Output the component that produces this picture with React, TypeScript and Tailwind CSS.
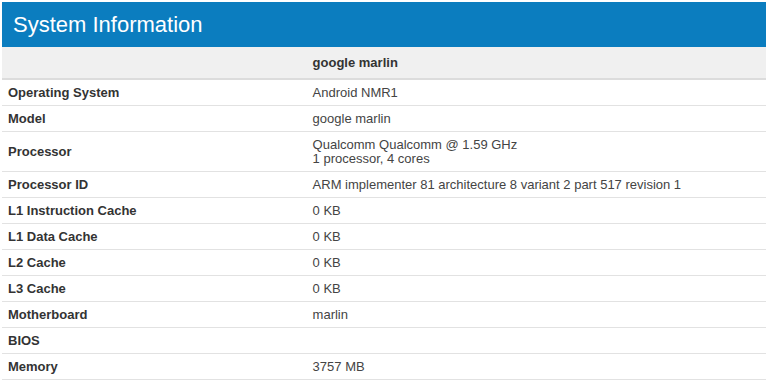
const rows: [string, string[]][] = [
  ['Operating System', ['Android NMR1']],
  ['Model', ['google marlin']],
  ['Processor', ['Qualcomm Qualcomm @ 1.59 GHz', '1 processor, 4 cores']],
  ['Processor ID', ['ARM implementer 81 architecture 8 variant 2 part 517 revision 1']],
  ['L1 Instruction Cache', ['0 KB']],
  ['L1 Data Cache', ['0 KB']],
  ['L2 Cache', ['0 KB']],
  ['L3 Cache', ['0 KB']],
  ['Motherboard', ['marlin']],
  ['BIOS', []],
  ['Memory', ['3757 MB']],
];

const App = () => {
  return (
    <div className="bg-white px-[2px] pt-[2px] font-['Liberation_Sans',Arial,sans-serif] text-[13px]">
      <div className="h-[45px] bg-[#0b7dbf] pl-[11px] flex items-center">
        <h1 className="text-[22px] leading-none text-white">System Information</h1>
      </div>
      <table className="w-full border-collapse">
        <thead>
          <tr className="bg-[#f0f0f0] border-b-2 border-[#dcdcdc]">
            <th className="w-[40%] h-[32px]" />
            <th className="h-[32px] pl-[5px] text-left font-bold text-[#333]">google marlin</th>
          </tr>
        </thead>
        <tbody>
          {rows.map(([label, value]) => (
            <tr key={label} className="border-b border-[#e2e2e2]">
              <td className="pl-[6px] pt-[6px] pb-[5px] leading-[14px] font-bold text-[#333] align-middle">{label}</td>
              <td className="pl-[5px] pt-[6px] pb-[5px] leading-[14px] text-[#444] align-middle">
                {value.map((v) => (
                  <div key={v}>{v}</div>
                ))}
              </td>
            </tr>
          ))}
        </tbody>
      </table>
    </div>
  );
};

export default App;
